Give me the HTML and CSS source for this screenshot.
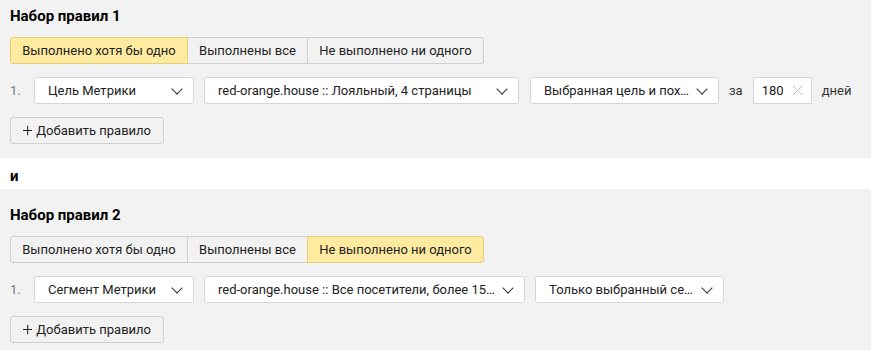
FILE: index.html
```html
<!DOCTYPE html>
<html lang="ru">
  <head>
    <meta charset="UTF-8" />
    <title>Наборы правил</title>
    <link rel="stylesheet" href="styles.css">
  </head>
  <body>
    <section class="rule-set rule-set-first">
      <h2>Набор правил 1</h2>
      <div class="switch">
        <button class="switch-btn active">Выполнено хотя бы одно</button>
        <button class="switch-btn">Выполнены все</button>
        <button class="switch-btn">Не выполнено ни одного</button>
      </div>
      <div class="rule">
        <span class="rule-num">1.</span>
        <div class="select w-type"><span class="select-text">Цель Метрики</span><span class="chevron"></span></div>
        <div class="select w-goal"><span class="select-text">red-orange.house :: Лояльный, 4 страницы</span><span class="chevron"></span></div>
        <div class="select w-mode"><span class="select-text">Выбранная цель и похожие</span><span class="chevron"></span></div>
        <span class="rule-label">за</span>
        <div class="days">
          <span>180</span>
          <svg class="clear" width="11" height="11" viewBox="0 0 11 11">
            <path d="M1 1 L10 10 M10 1 L1 10" stroke="#c4c4c4" stroke-width="1" fill="none" />
          </svg>
        </div>
        <span class="rule-label">дней</span>
      </div>
      <button class="add-btn">
        <svg class="plus" width="11" height="11" viewBox="0 0 11 11">
          <path d="M5.5 0 V11 M0 5.5 H11" stroke="#222" stroke-width="1.2" fill="none" />
        </svg>
        Добавить правило
      </button>
    </section>

    <div class="joiner">и</div>

    <section class="rule-set">
      <h2>Набор правил 2</h2>
      <div class="switch">
        <button class="switch-btn">Выполнено хотя бы одно</button>
        <button class="switch-btn">Выполнены все</button>
        <button class="switch-btn active">Не выполнено ни одного</button>
      </div>
      <div class="rule">
        <span class="rule-num">1.</span>
        <div class="select w-type"><span class="select-text">Сегмент Метрики</span><span class="chevron"></span></div>
        <div class="select w-segment"><span class="select-text">red-orange.house :: Все посетители, более 15 страниц</span><span class="chevron"></span></div>
        <div class="select w-mode"><span class="select-text">Только выбранный сегмент</span><span class="chevron"></span></div>
      </div>
      <button class="add-btn">
        <svg class="plus" width="11" height="11" viewBox="0 0 11 11">
          <path d="M5.5 0 V11 M0 5.5 H11" stroke="#222" stroke-width="1.2" fill="none" />
        </svg>
        Добавить правило
      </button>
    </section>
  </body>
</html>
```

FILE: styles.css
```css
/* General Styling */
body {
  font-family: Roboto, Arial, sans-serif;
  font-size: 13px;
  margin: 0;
  padding: 0;
  background-color: #fff;
  color: #000;
}

.rule-set {
  background-color: #f2f2f2;
  padding: 19px 10px 14px;
}

.rule-set-first {
  padding-top: 9px;
}

.rule-set h2 {
  margin: 0 0 13px;
  font-size: 15px;
  line-height: 15px;
  font-weight: bold;
}

.joiner {
  padding: 9px 10px 0;
  height: 22px;
  font-size: 15px;
  font-weight: bold;
}

/* Switch */
.switch {
  display: flex;
  margin-bottom: 13px;
}

.switch-btn {
  height: 27px;
  padding: 0;
  font-family: inherit;
  font-size: 13px;
  white-space: nowrap;
  color: #222;
  background-color: #f2f2f2;
  border: 1px solid #cfcfcf;
  border-left: none;
}

.switch-btn:first-child {
  width: 178px;
  border-left: 1px solid #cfcfcf;
  border-radius: 3px 0 0 3px;
}

.switch-btn:nth-child(2) {
  width: 120px;
}

.switch-btn:last-child {
  width: 176px;
  border-radius: 0 3px 3px 0;
}

.switch-btn.active {
  background-color: #ffeba0;
  border-color: #e5cf7b;
}

.switch-btn:first-child.active {
  border-right: 1px solid #e5cf7b;
}

.switch-btn:last-child.active {
  margin-left: -1px;
  width: 177px;
  border-left: 1px solid #e5cf7b;
}

/* Rule row */
.rule {
  display: flex;
  align-items: center;
  gap: 10px;
  margin-bottom: 13px;
}

.rule-num {
  width: 14px;
  color: #777;
}

.select {
  display: flex;
  align-items: center;
  box-sizing: border-box;
  height: 27px;
  padding: 0 9px 0 13px;
  background-color: #fff;
  border: 1px solid #d6d6d6;
  border-radius: 3px;
  color: #222;
}

.select-text {
  flex: 1;
  white-space: nowrap;
  overflow: hidden;
  text-overflow: ellipsis;
}

.chevron {
  width: 7px;
  height: 7px;
  margin: 0 3px 4px 8px;
  border-right: 1px solid #333;
  border-bottom: 1px solid #333;
  transform: rotate(45deg);
}

.w-type {
  width: 160px;
}

.w-goal {
  width: 315px;
  margin-right: 1px;
}

.w-segment {
  width: 321px;
}

.w-mode {
  width: 189px;
}

.rule-label {
  color: #333;
}

.days {
  display: flex;
  align-items: center;
  justify-content: space-between;
  box-sizing: border-box;
  width: 59px;
  height: 27px;
  padding: 0 8px 0 8px;
  background-color: #fff;
  border: 1px solid #d6d6d6;
  color: #222;
}

/* Add button */
.add-btn {
  display: flex;
  align-items: center;
  gap: 4px;
  height: 27px;
  width: 154px;
  padding: 0 12px;
  font-family: inherit;
  font-size: 13px;
  white-space: nowrap;
  color: #222;
  background-color: #f2f2f2;
  border: 1px solid #cfcfcf;
  border-radius: 3px;
}
```
